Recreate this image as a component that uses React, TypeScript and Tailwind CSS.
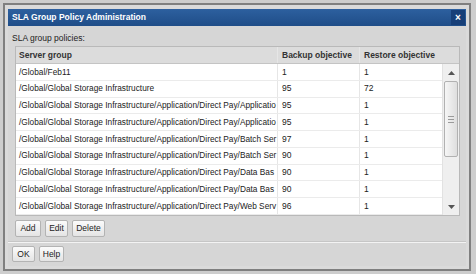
const base = "/Global/Global Storage Infrastructure/Application/Direct Pay/";

const rows: [string, string, string][] = [
  ["/Global/Feb11", "1", "1"],
  ["/Global/Global Storage Infrastructure", "95", "72"],
  [base + "Applicatio", "95", "1"],
  [base + "Applicatio", "95", "1"],
  [base + "Batch Ser", "97", "1"],
  [base + "Batch Ser", "90", "1"],
  [base + "Data Bas", "90", "1"],
  [base + "Data Bas", "90", "1"],
  [base + "Web Serv", "96", "1"],
];

function Btn({ label, w }: { label: string; w: string }) {
  return (
    <button
      className={`${w} h-full flex items-center justify-center border border-[#b3b3b3] rounded-[2px] bg-gradient-to-b from-[#fbfbfb] to-[#e4e4e4] text-[8.5px] text-[#222]`}
    >
      {label}
    </button>
  );
}

export default function App() {
  return (
    <div className="w-[476px] h-[274px] bg-[#cdcdcd] pt-[3px] pl-[3px] pr-[5px] pb-[3px] font-['Liberation_Sans',Arial,sans-serif] text-[#222]">
      <div className="h-full border-2 border-[#7f7f7f] bg-[#dadada] pt-[4px] pl-[3px] pr-[3px] pb-[3px]">
        <div className="h-full flex flex-col bg-[#d6d6d6]">
          {/* title bar */}
          <div className="h-[17px] flex items-center justify-between bg-gradient-to-b from-[#2d609f] to-[#1f4d88] pl-[4px] pr-[1px]">
            <span className="text-[8.5px] font-bold text-white">SLA Group Policy Administration</span>
            <span className="w-[14px] h-[15px] flex items-center justify-center bg-[#173f78] text-white text-[10px] font-bold leading-none">
              ×
            </span>
          </div>

          <div className="pl-[4px] mt-[6px] h-[12px] flex items-center text-[8.5px]">SLA group policies:</div>

          {/* table */}
          <div className="ml-[7px] mr-[6px] mt-[2px] h-[170px] border border-[#b9b9b9] bg-white flex flex-col">
            <div className="h-[17px] shrink-0 grid grid-cols-[262px_82px_81px_1fr] bg-[#dcdcdc] border-b border-[#c4c4c4] text-[8.5px] font-bold text-[#333]">
              <div className="flex items-center pl-[3px] border-r border-[#e6e6e6]">Server group</div>
              <div className="flex items-center pl-[4px] border-r border-[#e6e6e6]">Backup objective</div>
              <div className="flex items-center pl-[4px]">Restore objective</div>
              <div />
            </div>
            <div className="flex-1 flex min-h-0">
              <div className="flex-1 overflow-hidden">
                {rows.map((r, i) => (
                  <div
                    key={i}
                    className="h-[16.75px] grid grid-cols-[262px_82px_81px] border-b border-[#ebebeb] text-[8.5px]"
                  >
                    <div className="flex items-center pl-[3px] border-r border-[#e6e6e6] overflow-hidden whitespace-nowrap text-[8.3px]">
                      {r[0]}
                    </div>
                    <div className="flex items-center pl-[4px] border-r border-[#e6e6e6]">{r[1]}</div>
                    <div className="flex items-center pl-[4px]">{r[2]}</div>
                  </div>
                ))}
              </div>
              {/* scrollbar */}
              <div className="w-[17px] bg-[#efefef] border-l border-[#e2e2e2] flex flex-col items-center">
                <div className="h-[17px] flex items-center justify-center">
                  <svg width="7" height="4" viewBox="0 0 7 4">
                    <path d="M0 4 L3.5 0 L7 4 Z" fill="#555" />
                  </svg>
                </div>
                <div className="w-[14px] h-[76px] border border-[#b1b1b1] rounded-[2px] bg-gradient-to-r from-[#f6f6f6] to-[#dedede] flex flex-col items-center justify-center gap-[2px]">
                  <div className="w-[6px] h-px bg-[#9a9a9a]" />
                  <div className="w-[6px] h-px bg-[#9a9a9a]" />
                  <div className="w-[6px] h-px bg-[#9a9a9a]" />
                </div>
                <div className="flex-1" />
                <div className="h-[17px] flex items-center justify-center">
                  <svg width="7" height="4" viewBox="0 0 7 4">
                    <path d="M0 0 L3.5 4 L7 0 Z" fill="#555" />
                  </svg>
                </div>
              </div>
            </div>
          </div>

          {/* table actions */}
          <div className="ml-[7px] mt-[4px] h-[17px] flex gap-[4px]">
            <Btn label="Add" w="w-[26px]" />
            <Btn label="Edit" w="w-[23px]" />
            <Btn label="Delete" w="w-[33px]" />
          </div>

          <div className="mt-[4px] h-px bg-[#c6c6c6]" />
          <div className="h-px bg-[#f3f3f3]" />

          <div className="ml-[4px] mt-[3px] h-[16px] flex gap-[4px]">
            <Btn label="OK" w="w-[23px]" />
            <Btn label="Help" w="w-[25px]" />
          </div>
        </div>
      </div>
    </div>
  );
}
